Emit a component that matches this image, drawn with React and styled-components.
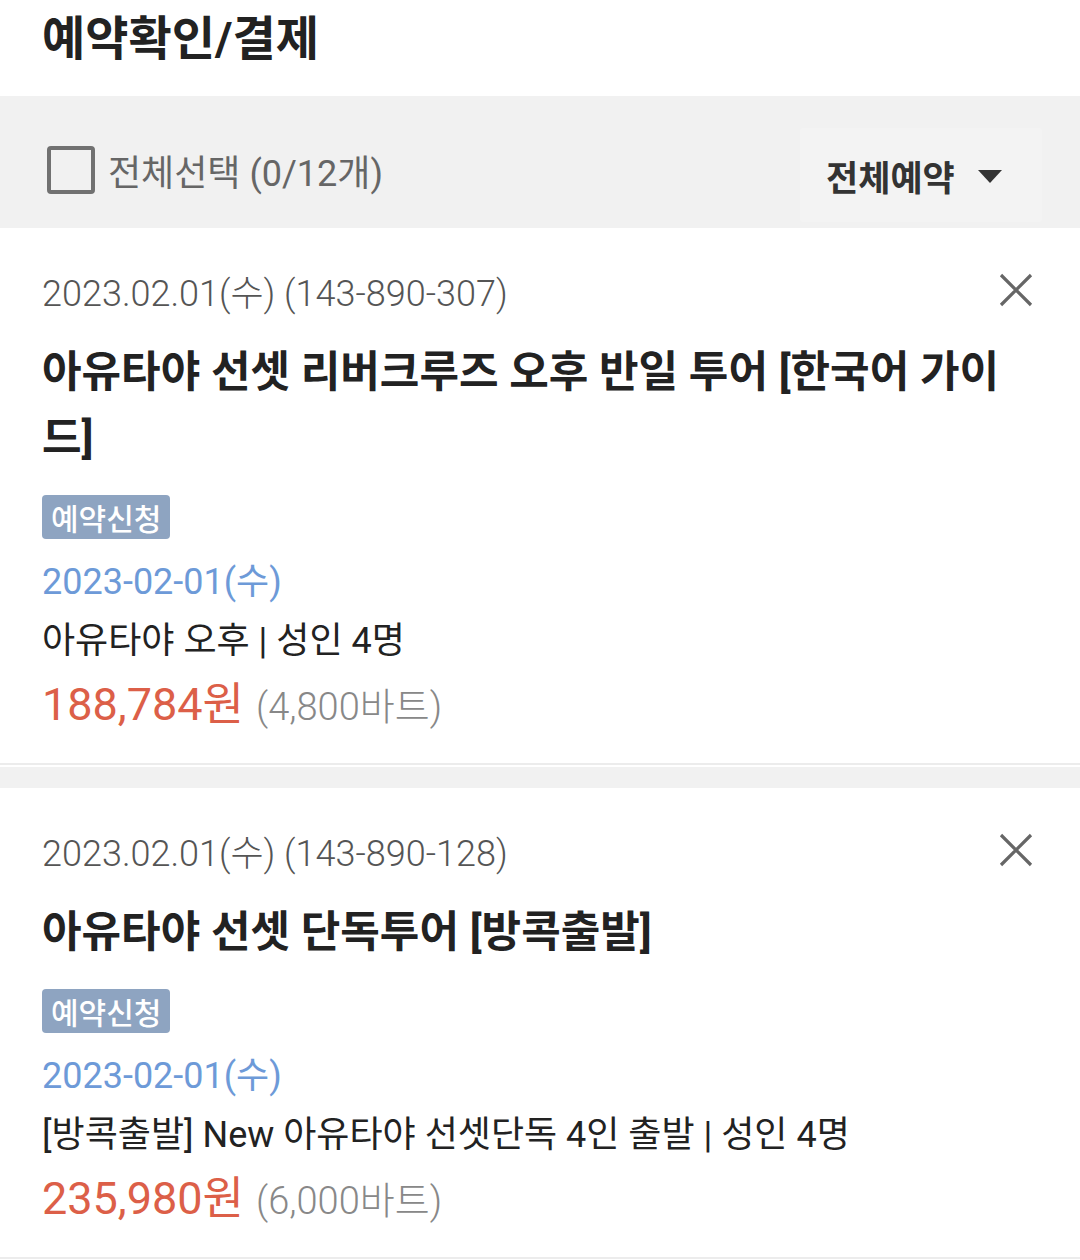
import React from "react";
import styled, { createGlobalStyle } from "styled-components";

const GlobalStyle = createGlobalStyle`
  html, body { margin: 0; padding: 0; background: #f1f1f1; }
  body { font-family: Roboto, "Noto Sans CJK KR", "Noto Sans", sans-serif; }
  * { box-sizing: border-box; }
`;

const Page = styled.div`
  width: 1080px;
  min-height: 1260px;
  background: #f1f1f1;
`;

const Header = styled.header`
  background: #fff;
  padding: 9px 42px 27px;
`;

const Title = styled.h1`
  margin: 0;
  font-size: 47px;
  line-height: 60px;
  font-weight: 700;
  color: #222;
`;

const FilterBar = styled.div`
  display: flex;
  justify-content: space-between;
  align-items: flex-start;
  padding: 32px 38px 6px 47px;
`;

const SelectAll = styled.label`
  display: flex;
  align-items: center;
  gap: 13px;
  margin-top: 14px;
  height: 56px;
  font-size: 36px;
  color: #666;
  cursor: pointer;
`;

const Checkbox = styled.span`
  width: 48px;
  height: 48px;
  border: 4px solid #717171;
  border-radius: 4px;
  background: transparent;
`;

const Dropdown = styled.button`
  display: flex;
  align-items: center;
  gap: 23px;
  height: 94px;
  width: 242px;
  padding: 0 0 0 26px;
  border: none;
  border-radius: 3px;
  background: #f3f3f3;
  font-family: inherit;
  font-size: 35px;
  font-weight: 700;
  color: #333;
`;

const Caret = styled.span`
  width: 0;
  height: 0;
  border-left: 12.5px solid transparent;
  border-right: 12.5px solid transparent;
  border-top: 13px solid #333;
  margin-top: 2px;
`;

const List = styled.div`
  display: flex;
  flex-direction: column;
  gap: 23px;
`;

const Card = styled.article`
  background: #fff;
  padding: 41px 42px 28px;
  border-bottom: 2px solid #ececec;
  box-shadow: 0 2px 0 #fff;
`;

const TopRow = styled.div`
  display: flex;
  justify-content: space-between;
  align-items: flex-start;
`;

const OrderDate = styled.div`
  font-size: 36px;
  line-height: 50px;
  font-weight: 300;
  color: #555;
`;

const CloseButton = styled.button`
  width: 40px;
  height: 40px;
  padding: 0;
  margin-top: 1px;
  margin-right: 2px;
  border: none;
  background: none;
  display: flex;
  align-items: center;
  justify-content: center;
`;

const ProductTitle = styled.h2`
  margin: 20px 0 0;
  font-size: 43px;
  line-height: 66px;
  font-weight: 700;
  color: #222;
`;

const Badge = styled.span`
  display: inline-flex;
  align-items: center;
  height: 44px;
  margin-top: 24px;
  padding: 0 9px;
  border-radius: 4px;
  background: #8ea4c1;
  color: #fff;
  font-size: 30px;
  font-weight: 500;
`;

const TourDate = styled.div`
  margin-top: 17px;
  font-size: 36px;
  line-height: 52px;
  color: #6d9ad8;
`;

const Option = styled.div`
  margin-top: 7px;
  font-size: 36px;
  line-height: 52px;
  color: #222;
`;

const PriceRow = styled.div`
  display: flex;
  align-items: baseline;
  gap: 12px;
  height: 60px;
  margin-top: 8px;
  line-height: 60px;
  white-space: nowrap;
`;

const Price = styled.span`
  font-size: 45px;
  font-weight: 400;
  color: #dc5f48;
`;

const Local = styled.span`
  font-size: 38px;
  font-weight: 300;
  color: #888;
`;

const CloseIcon = () => (
  <svg width="40" height="40" viewBox="0 0 40 40">
    <path d="M5 5 L35 35 M35 5 L5 35" stroke="#666" strokeWidth="3.2" fill="none" />
  </svg>
);

const items = [
  {
    ordered: "2023.02.01(수) (143-890-307)",
    title: "아유타야 선셋 리버크루즈 오후 반일 투어 [한국어 가이드]",
    date: "2023-02-01(수)",
    option: "아유타야 오후 | 성인 4명",
    price: "188,784원",
    local: "(4,800바트)",
  },
  {
    ordered: "2023.02.01(수) (143-890-128)",
    title: "아유타야 선셋 단독투어 [방콕출발]",
    date: "2023-02-01(수)",
    option: "[방콕출발] New 아유타야 선셋단독 4인 출발 | 성인 4명",
    price: "235,980원",
    local: "(6,000바트)",
  },
];

export default function App() {
  return (
    <Page>
      <GlobalStyle />
      <Header>
        <Title>예약확인/결제</Title>
      </Header>
      <FilterBar>
        <SelectAll>
          <Checkbox />
          전체선택 (0/12개)
        </SelectAll>
        <Dropdown>
          전체예약
          <Caret />
        </Dropdown>
      </FilterBar>
      <List>
        {items.map((it) => (
          <Card key={it.ordered}>
            <TopRow>
              <OrderDate>{it.ordered}</OrderDate>
              <CloseButton aria-label="삭제">
                <CloseIcon />
              </CloseButton>
            </TopRow>
            <ProductTitle>{it.title}</ProductTitle>
            <Badge>예약신청</Badge>
            <TourDate>{it.date}</TourDate>
            <Option>{it.option}</Option>
            <PriceRow>
              <Price>{it.price}</Price>
              <Local>{it.local}</Local>
            </PriceRow>
          </Card>
        ))}
      </List>
    </Page>
  );
}
